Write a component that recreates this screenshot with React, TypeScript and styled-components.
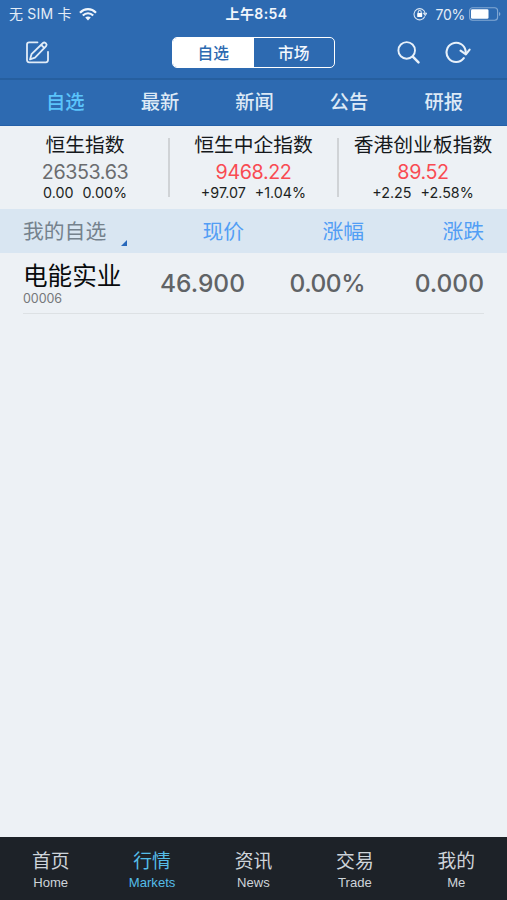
import React from "react";
import styled, { createGlobalStyle } from "styled-components";

const Global = createGlobalStyle`
  * { box-sizing: border-box; }
  body { margin: 0; background: #edf1f5; font-family: Inter, "Noto Sans CJK SC", sans-serif; }
`;

const Screen = styled.div`
  display: flex;
  flex-direction: column;
  width: 507px;
  height: 900px;
  overflow: hidden;
  background: #edf1f5;
  white-space: nowrap;
`;

const StatusBar = styled.div`
  display: grid;
  grid-template-columns: 1fr auto 1fr;
  align-items: center;
  height: 27px;
  padding: 0 6px 0 9px;
  background: #2d6ab1;
  color: #e4edf7;
  font-size: 14px;
  line-height: 27px;
`;

const StatusGroup = styled.div<{ $end?: boolean }>`
  display: flex;
  align-items: center;
  justify-content: ${(p) => (p.$end ? "flex-end" : "flex-start")};
`;

const Carrier = styled.span`
  margin-right: 7px;
  font-size: 14px;
  letter-spacing: 0.2px;
  line-height: 28px;
`;

const Clock = styled.span`
  padding-left: 3px;
  font-size: 14px;
  font-weight: 600;
  letter-spacing: 0.4px;
  line-height: 28px;
  color: #f1f6fc;
`;

const Percent = styled.span`
  margin: 0 4px 0 8px;
  letter-spacing: -0.25px;
`;

const NavBar = styled.div`
  display: grid;
  grid-template-columns: 1fr 163px 1fr;
  align-items: center;
  height: 53px;
  padding: 0 36px 0 24px;
  border-bottom: 2px solid #265f9f;
  background: #2d6ab1;
`;

const NavIcons = styled.div`
  display: flex;
  justify-content: flex-end;
  gap: 24px;
`;

const Segmented = styled.div`
  display: grid;
  grid-template-columns: 1fr 1fr;
  width: 163px;
  height: 31px;
  margin-left: 6px;
  border: 1.5px solid #fff;
  border-radius: 5px;
  overflow: hidden;
`;

const Segment = styled.div<{ $on?: boolean }>`
  background: ${(p) => (p.$on ? "#fff" : "transparent")};
  color: ${(p) => (p.$on ? "#2d6ab1" : "#f4f8fd")};
  font-size: 15.7px;
  font-weight: 500;
  line-height: 31px;
  text-align: center;
`;

const Tabs = styled.div`
  display: grid;
  grid-template-columns: repeat(5, 94.6px);
  justify-content: center;
  height: 46px;
  padding-left: 2px;
  border-bottom: 1px solid #2460a8;
  background: #2d6ab1;
`;

const Tab = styled.div<{ $on?: boolean }>`
  color: ${(p) => (p.$on ? "#5bc4fb" : "#dde9f6")};
  font-size: 19.3px;
  font-weight: 500;
  line-height: 44px;
  text-align: center;
`;

const Indices = styled.div`
  display: grid;
  grid-template-columns: 170px 169px 168px;
  height: 83px;
  padding-top: 12px;
`;

const IndexCard = styled.div`
  display: flex;
  flex-direction: column;
  align-items: center;
  height: 59px;
  border-right: 2px solid #d0d3d6;
  &:first-child { padding-left: 2px; }
  &:last-child { border-right: 0; }
`;

const IndexName = styled.div`
  height: 24px;
  margin-top: -5px;
  color: #15181b;
  font-size: 19.8px;
  line-height: 24px;
`;

const IndexValue = styled.div<{ $up: boolean }>`
  height: 27px;
  color: ${(p) => (p.$up ? "#f94b52" : "#6a6c6f")};
  font-size: 19.7px;
  letter-spacing: -0.4px;
  line-height: 30px;
`;

const IndexChange = styled.div`
  display: flex;
  gap: 9px;
  color: #1c1f22;
  font-size: 14.3px;
  line-height: 18px;
`;

const TableHead = styled.div`
  display: grid;
  grid-template-columns: 104px 117px 120px 120px;
  height: 44px;
  padding: 0 23px;
  background: #d9e6f2;
  color: #529ef5;
  font-size: 20.8px;
  line-height: 46px;
`;

const HeadCell = styled.div`
  text-align: right;
`;

const GroupCell = styled.div`
  display: flex;
  align-items: flex-end;
  justify-content: space-between;
  height: 44px;
  color: #75828d;
  span { height: 44px; }
  svg { margin-bottom: 7px; }
`;

const StockRow = styled.div`
  display: grid;
  grid-template-columns: 104px 118px 120px 119px;
  height: 61px;
  margin: 0 23px;
  border-bottom: 1px solid #dde1e4;
`;

const StockName = styled.div`
  height: 36px;
  color: #080a0c;
  font-size: 24.6px;
  line-height: 47px;
`;

const StockCode = styled.div`
  color: #75777a;
  font-size: 12.5px;
  letter-spacing: -0.05px;
  line-height: 19px;
`;

const Quote = styled.div<{ $tight?: boolean }>`
  color: #606366;
  font-size: 24.5px;
  letter-spacing: ${(p) => (p.$tight ? "-0.5px" : "0")};
  font-weight: 500;
  line-height: 61px;
  text-align: right;
`;

const Filler = styled.div`
  flex: 1;
`;

const BottomBar = styled.div`
  display: grid;
  grid-template-columns: repeat(5, 1fr);
  height: 63px;
  background: #1d2228;
`;

const BottomItem = styled.div<{ $on?: boolean }>`
  display: flex;
  flex-direction: column;
  align-items: center;
  padding-top: 10px;
  color: ${(p) => (p.$on ? "#55bde8" : "#ced4da")};
`;

const BottomZh = styled.div`
  height: 27px;
  font-size: 18.8px;
  line-height: 29px;
`;

const BottomEn = styled.div`
  font-family: "Liberation Sans", sans-serif;
  font-size: 13.1px;
  line-height: 17px;
`;

const WifiIcon = () => (
  <svg width="18" height="13" viewBox="0 0 18 13" fill="none" stroke="#eff5fc" strokeWidth="2.2">
    <path d="M1 4.7C5.5 0 12.5 0 17 4.7M3.8 7.5c3-3 7.4-3 10.4 0" />
    <path d="M6.2 9.6c1.6-1.5 4-1.5 5.6 0L9 12.4Z" fill="#eff5fc" stroke="none" />
  </svg>
);

const LockIcon = () => (
  <svg width="14" height="14" viewBox="0 0 14 14" fill="none" stroke="#d8e5f3" strokeWidth="1.1">
    <path d="M11.8 9.5A5.6 5.6 0 1 1 12.2 6.5M10.6 6.2h3.1l-1.5 2.2Z" />
    <rect x="4.2" y="6" width="5" height="4" rx=".4" fill="#fff" stroke="none" />
    <path d="M5.2 6V5a1.5 1.5 0 0 1 3 0v1" />
  </svg>
);

const BatteryIcon = () => (
  <svg width="32" height="14" viewBox="0 0 32 14">
    <rect x=".6" y=".7" width="28" height="12.6" rx="3" fill="none" stroke="#83a9d4" strokeWidth="1.1" />
    <rect x="2" y="2.3" width="17.5" height="9.4" rx="1.3" fill="#fff" />
    <path d="M30 5v4q1.4-.6 1.4-2T30 5Z" fill="#83a9d4" />
  </svg>
);

const EditIcon = () => (
  <svg width="27" height="25" viewBox="0 0 27 25" fill="none" stroke="#e1ecf8" strokeWidth="1.8" strokeLinecap="round" strokeLinejoin="round">
    <path d="M13.5 2.3H5.2Q3 2.3 3 4.5v15.6q0 2.2 2.2 2.2h16.6q2.2 0 2.2-2.2V11.8" />
    <path d="m6 19.4 1.5-5.2L19 3q1.2-1.1 2.4 0l.7.7q1.1 1.2 0 2.4L11 17.7ZM17.2 4.8l3.2 3.3" />
  </svg>
);

const SearchIcon = () => (
  <svg width="24" height="24" viewBox="0 0 24 24" fill="none" stroke="#e8f1fa" strokeLinecap="round">
    <circle cx="9.7" cy="9.4" r="8.3" strokeWidth="1.9" />
    <path d="m15.8 15.6 5.7 5.8" strokeWidth="2.5" />
  </svg>
);

const RefreshIcon = () => (
  <svg width="26" height="24" viewBox="0 0 26 24" fill="none" stroke="#e8f1fa" strokeWidth="2.1" strokeLinecap="round" strokeLinejoin="round">
    <path d="M18.8 17.2A9.6 9.6 0 1 1 20.6 9.8L20.9 13" />
    <path d="m15.6 9.6 5.3 3.8 3.7-4.8" />
  </svg>
);

const CornerMark = () => (
  <svg width="6" height="6" viewBox="0 0 6 6">
    <path d="M6 0v6H0Z" fill="#2868bb" />
  </svg>
);

const tabs = ["自选", "最新", "新闻", "公告", "研报"];

const indices = [
  { name: "恒生指数", value: "26353.63", change: "0.00", percent: "0.00%", up: false },
  { name: "恒生中企指数", value: "9468.22", change: "+97.07", percent: "+1.04%", up: true },
  { name: "香港创业板指数", value: "89.52", change: "+2.25", percent: "+2.58%", up: true },
];

const sections = [
  ["首页", "Home"],
  ["行情", "Markets"],
  ["资讯", "News"],
  ["交易", "Trade"],
  ["我的", "Me"],
];

export default function App() {
  return (
    <Screen lang="zh-CN">
      <Global />
      <StatusBar>
        <StatusGroup>
          <Carrier>无 SIM 卡</Carrier>
          <WifiIcon />
        </StatusGroup>
        <Clock>上午8:54</Clock>
        <StatusGroup $end>
          <LockIcon />
          <Percent>70%</Percent>
          <BatteryIcon />
        </StatusGroup>
      </StatusBar>
      <NavBar>
        <EditIcon />
        <Segmented>
          <Segment $on>自选</Segment>
          <Segment>市场</Segment>
        </Segmented>
        <NavIcons>
          <SearchIcon />
          <RefreshIcon />
        </NavIcons>
      </NavBar>
      <Tabs>
        {tabs.map((label, i) => (
          <Tab key={label} $on={i === 0}>{label}</Tab>
        ))}
      </Tabs>
      <Indices>
        {indices.map((item) => (
          <IndexCard key={item.name}>
            <IndexName>{item.name}</IndexName>
            <IndexValue $up={item.up}>{item.value}</IndexValue>
            <IndexChange>
              <span>{item.change}</span>
              <span>{item.percent}</span>
            </IndexChange>
          </IndexCard>
        ))}
      </Indices>
      <TableHead>
        <GroupCell>
          <span>我的自选</span>
          <CornerMark />
        </GroupCell>
        <HeadCell>现价</HeadCell>
        <HeadCell>涨幅</HeadCell>
        <HeadCell>涨跌</HeadCell>
      </TableHead>
      <StockRow>
        <div>
          <StockName>电能实业</StockName>
          <StockCode>00006</StockCode>
        </div>
        <Quote>46.900</Quote>
        <Quote $tight>0.00%</Quote>
        <Quote>0.000</Quote>
      </StockRow>
      <Filler />
      <BottomBar>
        {sections.map(([zh, en], i) => (
          <BottomItem key={en} $on={i === 1}>
            <BottomZh>{zh}</BottomZh>
            <BottomEn>{en}</BottomEn>
          </BottomItem>
        ))}
      </BottomBar>
    </Screen>
  );
}
